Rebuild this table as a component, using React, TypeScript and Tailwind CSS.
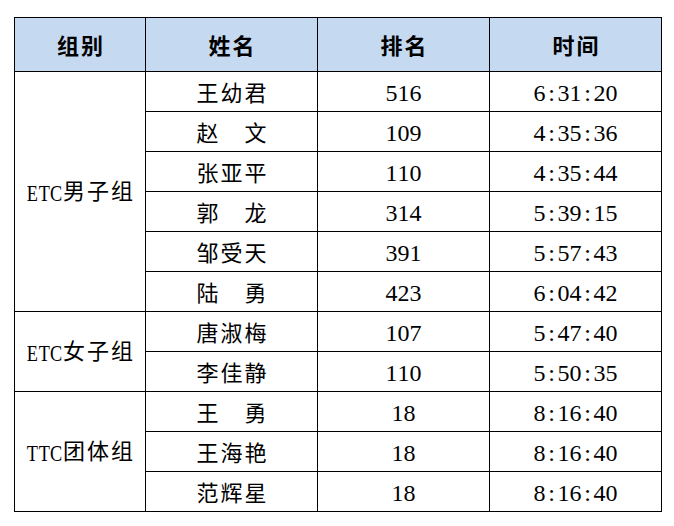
import React from "react";

type Row = { name: string; rank: string; time: string };
type Group = { label: string; rows: Row[] };

const groups: Group[] = [
  {
    label: "ETC男子组",
    rows: [
      { name: "王幼君", rank: "516", time: "6:31:20" },
      { name: "赵\u3000文", rank: "109", time: "4:35:36" },
      { name: "张亚平", rank: "110", time: "4:35:44" },
      { name: "郭\u3000龙", rank: "314", time: "5:39:15" },
      { name: "邹受天", rank: "391", time: "5:57:43" },
      { name: "陆\u3000勇", rank: "423", time: "6:04:42" },
    ],
  },
  {
    label: "ETC女子组",
    rows: [
      { name: "唐淑梅", rank: "107", time: "5:47:40" },
      { name: "李佳静", rank: "110", time: "5:50:35" },
    ],
  },
  {
    label: "TTC团体组",
    rows: [
      { name: "王\u3000勇", rank: "18", time: "8:16:40" },
      { name: "王海艳", rank: "18", time: "8:16:40" },
      { name: "范辉星", rank: "18", time: "8:16:40" },
    ],
  },
];

function Cells({ text, bold }: { text: string; bold?: boolean }) {
  return (
    <span className={bold ? "inline-flex whitespace-nowrap font-bold" : "inline-flex whitespace-nowrap"}>
      {Array.from(text).map((ch, i) => {
        const code = ch.charCodeAt(0);
        if (code >= 65 && code <= 90) {
          return (
            <span key={i} className="inline-flex w-[12px] justify-center text-[24px]">
              <span className="inline-block text-[24px] scale-x-[0.76]">{ch}</span>
            </span>
          );
        }
        if (code < 0x2000) {
          return (
            <span key={i} className="inline-flex w-[12px] justify-center text-[24px]">
              {ch}
            </span>
          );
        }
        return (
          <span key={i} className="inline-flex w-[24px] justify-center text-[22px]">
            {ch === "\u3000" ? "\u00a0" : ch}
          </span>
        );
      })}
    </span>
  );
}

const cell = "border border-black text-center align-middle p-0 pt-[3px]";

export default function App() {
  return (
    <div
      className="min-h-[526px] w-[674px] bg-white pl-[14px] pt-[17px] text-black"
      style={{ fontFamily: '"Liberation Serif", "Noto Sans CJK SC", serif' }}
    >
      <table className="border-collapse border border-black table-fixed w-[647px]">
        <colgroup>
          <col className="w-[131px]" />
          <col className="w-[172px]" />
          <col className="w-[172px]" />
          <col className="w-[172px]" />
        </colgroup>
        <thead>
          <tr className="h-[54px] bg-[#c5d9f1]">
            <th className={cell}><Cells text="组别" bold /></th>
            <th className={cell}><Cells text="姓名" bold /></th>
            <th className={cell}><Cells text="排名" bold /></th>
            <th className={cell}><Cells text="时间" bold /></th>
          </tr>
        </thead>
        <tbody>
          {groups.map((g) =>
            g.rows.map((r, i) => (
              <tr key={g.label + i} className="h-[40px]">
                {i === 0 && (
                  <td className={cell} rowSpan={g.rows.length}>
                    <Cells text={g.label} />
                  </td>
                )}
                <td className={cell}><Cells text={r.name} /></td>
                <td className={cell}><Cells text={r.rank} /></td>
                <td className={cell}><Cells text={r.time} /></td>
              </tr>
            ))
          )}
        </tbody>
      </table>
    </div>
  );
}
